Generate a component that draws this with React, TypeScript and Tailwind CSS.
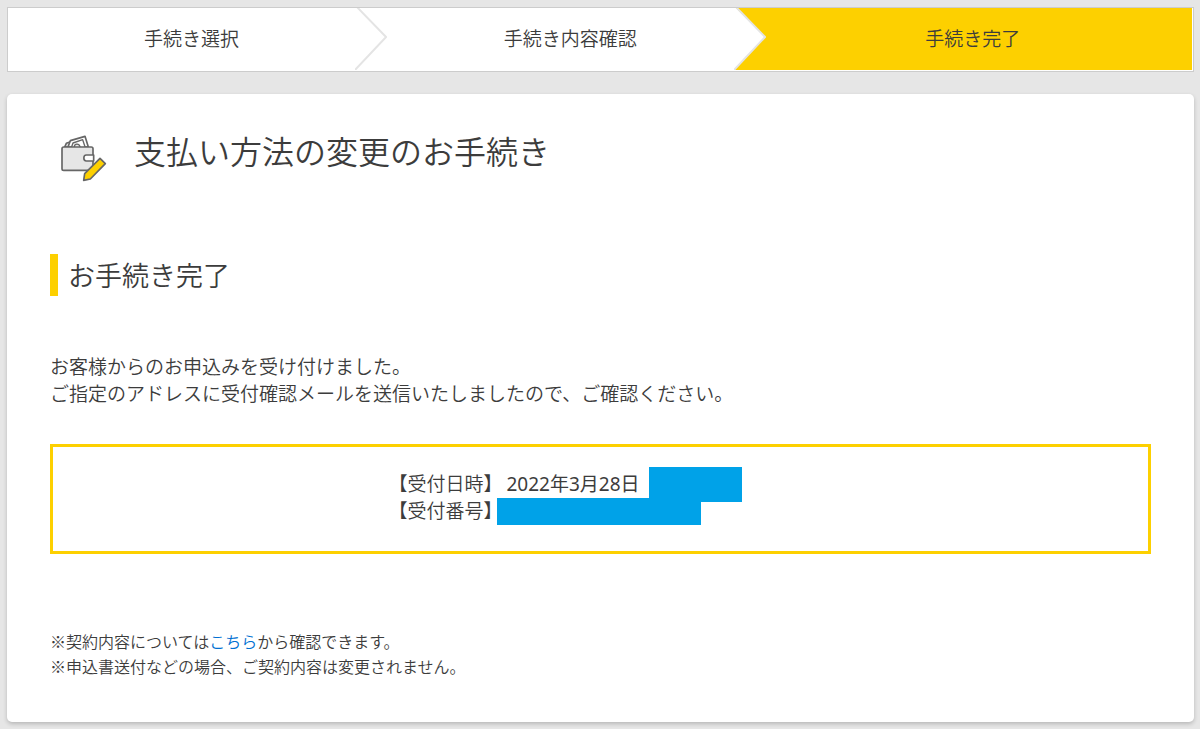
type StepProps = {
  label: string;
  active?: boolean;
};

const STEPS: StepProps[] = [
  { label: "手続き選択" },
  { label: "手続き内容確認" },
  { label: "手続き完了", active: true },
];

function StepArrow() {
  return (
    <svg
      className="absolute right-0 top-0 z-10 h-full w-8"
      viewBox="0 0 33 62"
      preserveAspectRatio="none"
      aria-hidden="true"
    >
      <path d="M0 0H2L32 29L0 62Z" fill="#fff" />
      <path d="M2 -1L32 29L0 62" fill="none" stroke="#e4e4e4" strokeWidth="2" />
    </svg>
  );
}

function Step({ label, active }: StepProps) {
  if (active) {
    return (
      <li
        aria-current="step"
        className="-ml-8 flex flex-1 items-center justify-center bg-[#fdd000] pb-1 pl-8 pr-3"
      >
        {label}
      </li>
    );
  }

  return (
    <li className="relative flex w-[32%] items-center justify-center pb-1 pr-3">
      {label}
      <StepArrow />
    </li>
  );
}

function WalletIcon() {
  return (
    <svg
      className="h-12 w-12 shrink-0"
      viewBox="0 0 144 144"
      fill="none"
      stroke="#666"
      strokeWidth="5"
      strokeLinejoin="round"
      strokeLinecap="round"
      aria-hidden="true"
    >
      <path d="M14 39L19 28L38 21L46 39Z" fill="#e6e6e6" />
      <path d="M24 39L31 20L75 7L85 39Z" fill="#fff" />
      <path d="M35 38L39 27L68 17L75 38" fill="#fff" strokeWidth="4" />
      <path d="M43 38C43 29 57 27 60 38" fill="#e6e6e6" strokeWidth="4" />
      <rect x="6" y="39" width="93" height="70" rx="5" fill="#e6e6e6" />
      <path d="M101 63H79C69 63 69 81 79 81H101V63Z" fill="#fff" />
      <path d="M120 73L136 89L91 135L71 139L74 119Z" fill="#fdd000" />
    </svg>
  );
}

export default function App() {
  return (
    <div className="min-h-screen bg-[#e6e6e6] pb-[7px] pl-[7px] pr-1.5 pt-[7px] font-['Noto_Sans_CJK_JP',sans-serif] text-[19px] font-[350] leading-[27px] text-[#3c3c3c]">
      <nav aria-label="手続きの流れ" className="border border-[#ccc] bg-white pb-px pr-px">
        <ol className="flex h-[62px]">
          {STEPS.map((step) => (
            <Step key={step.label} {...step} />
          ))}
        </ol>
      </nav>

      <main className="mt-[22px] rounded-[5px] bg-white px-[43px] pb-[43px] pt-10 shadow-[0_2px_4px_rgba(0,0,0,0.2)]">
        <div className="ml-2.5 flex h-12 items-start gap-[26px]">
          <WalletIcon />
          <h1 className="text-[32px] leading-8">支払い方法の変更のお手続き</h1>
        </div>

        <h2 className="mt-18 border-l-8 border-[#fdd000] pl-2.5 text-[27px] leading-[42px]">
          お手続き完了
        </h2>

        <p className="mt-14">
          お客様からのお申込みを受け付けました。
          <br />
          ご指定のアドレスに受付確認メールを送信いたしましたので、ご確認ください。
        </p>

        <div className="mt-[38px] border-3 border-[#fdd000] pb-[26px] pt-6">
          <dl className="mx-auto w-[424px] font-['Noto_Sans','Noto_Sans_CJK_JP',sans-serif]">
            <div className="flex h-[27px] items-center">
              <dt className="w-[108px] whitespace-nowrap">【受付日時】</dt>
              <dd className="flex items-center">
                <span className="w-[152px] whitespace-nowrap pl-2.5 font-normal">
                  2022年3月28日
                </span>
                <span className="h-[35px] w-[93px] bg-[#00a2e8]" />
              </dd>
            </div>
            <div className="flex h-[27px] items-center">
              <dt className="w-[108px] whitespace-nowrap">【受付番号】</dt>
              <dd className="h-[27px] w-[204px] bg-[#00a2e8]" />
            </div>
          </dl>
        </div>

        <div className="mt-[75px] text-base leading-[25px]">
          <p>
            ※契約内容については
            <a href="#contract" className="text-[#0070d2]">
              こちら
            </a>
            から確認できます。
          </p>
          <p>※申込書送付などの場合、ご契約内容は変更されません。</p>
        </div>
      </main>
    </div>
  );
}
